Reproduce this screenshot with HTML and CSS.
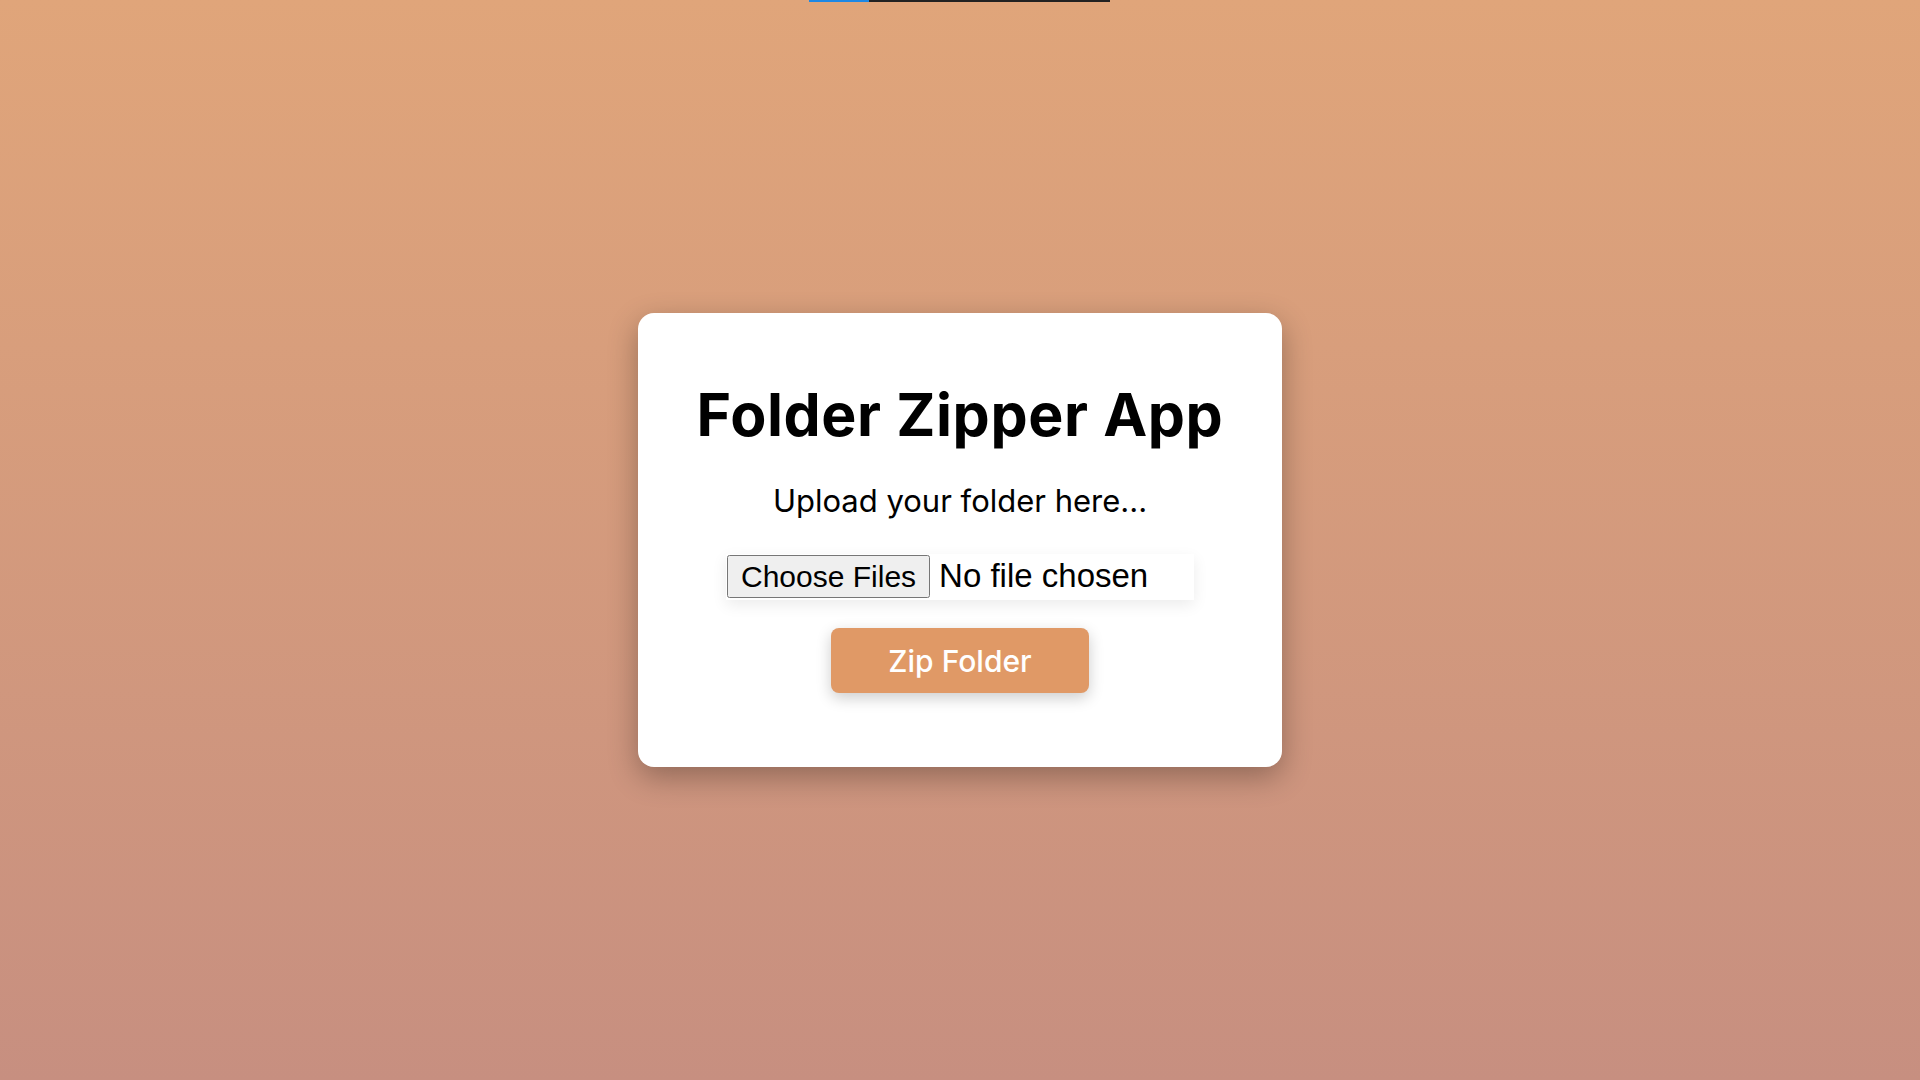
FILE: index.html
```html
<!DOCTYPE html>
<html lang="en">
<head>
  <meta charset="UTF-8" />
  <title>Folder Zipper App</title>
  <link rel="stylesheet" href="styles.css">
</head>
<body>

  <div class="progress"><div class="progress-fill"></div></div>

  <div class="container">
    <h1>Folder Zipper App</h1>
    <p class="subtitle">Upload your folder here...</p>
    <input type="file" id="folder-input" webkitdirectory multiple />
    <button id="zip-btn">Zip Folder</button>
  </div>

</body>
</html>
```

FILE: styles.css
```css
html, body {
  height: 100%;
}

body {
  margin: 0;
  font-family: Inter, "Open Sans", sans-serif;
  background: linear-gradient(to bottom, #e0a57a, #c78f80);
  display: flex;
  justify-content: center;
  align-items: center;
}

.progress {
  position: absolute;
  top: 0;
  left: 809px;
  width: 301px;
  height: 2px;
  background: #222;
}

.progress-fill {
  width: 60px;
  height: 100%;
  background: #1e88e5;
}

.container {
  width: 644px;
  box-sizing: border-box;
  background: #fff;
  border-radius: 16px;
  padding: 62px 40px 74px;
  display: flex;
  flex-direction: column;
  align-items: center;
  box-shadow: 0 10px 30px rgba(0,0,0,0.3);
}

h1 {
  margin: 0;
  font-size: 59px;
  font-weight: 700;
  line-height: 80px;
  letter-spacing: 0.6px;
  color: #000;
}

.subtitle {
  margin: 26px 0 0;
  font-size: 31px;
  line-height: 40px;
  color: #000;
}

#folder-input {
  margin-top: 33px;
  width: 468px;
  height: 46px;
  padding: 1px;
  box-sizing: border-box;
  font-family: "Liberation Sans", Arial, sans-serif;
  font-size: 33px;
  background: #fff;
  box-shadow: 0 5px 15px rgba(0,0,0,0.08);
}

#folder-input::file-selector-button {
  height: 43px;
  margin-right: 9px;
  padding: 0 12px;
  font-family: "Liberation Sans", Arial, sans-serif;
  font-size: 30px;
}

#zip-btn {
  margin-top: 28px;
  width: 258px;
  height: 65px;
  border: none;
  border-radius: 8px;
  background: #e09966;
  color: #fff;
  font-family: Inter, "Open Sans", sans-serif;
  font-size: 30px;
  font-weight: 500;
  cursor: pointer;
  box-shadow: 0 5px 15px rgba(0,0,0,0.2);
}
```
